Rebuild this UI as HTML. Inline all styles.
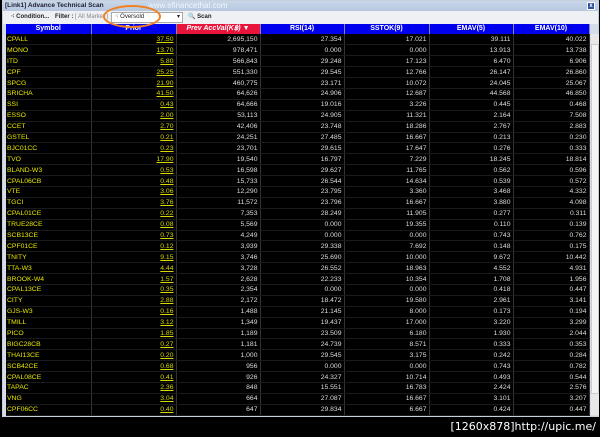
<!DOCTYPE html>
<html><head><meta charset="utf-8"><style>
*{margin:0;padding:0;box-sizing:border-box}
body{width:600px;height:437px;background:#000;position:relative;overflow:hidden;font-family:"Liberation Sans",sans-serif}
#win{position:absolute;left:2px;top:0;width:597px;height:417px;background:#d4dde8;border:1px solid #c8d0dc}
#title{position:absolute;left:0;top:0;width:100%;height:10px;background:linear-gradient(#c9d7ea,#b5c7e0);font-size:6.5px;font-weight:bold;color:#223;line-height:10px;padding-left:2px}
#close{position:absolute;right:3px;top:1px;width:8px;height:8px;background:#3050a0;border:1px solid #fff;color:#fff;font-size:6px;line-height:6px;text-align:center}
#tool{position:absolute;left:0;top:10px;width:100%;height:13px;background:#eef0f3;font-size:6px;color:#222;line-height:13px}
#tool span{position:absolute;top:0}
#grid{position:absolute;left:3px;top:23px;width:583px}
table{border-collapse:collapse;table-layout:fixed;width:583px}
th{height:10px;background:#0000ee;color:#fff;font-size:7px;font-weight:bold;border-right:1px solid #88a;text-align:center;line-height:10px}
th.red{background:#e8143c;font-style:italic}
td{height:10.9px;font-size:6.8px;color:#ddd;text-align:right;padding-right:2px;border-right:1px solid #333;border-bottom:1px solid #1a1a1a;line-height:9px;background:#000;white-space:nowrap}
td:first-child{text-align:left;color:#e8e800;padding-left:1px}
td:nth-child(2){color:#d8d800;text-decoration:underline}
#sb{position:absolute;left:588px;top:33px;width:8px;height:381px;background:#e8e8e8}
#sbt{position:absolute;left:588px;top:43px;width:8px;height:350px;background:#f4f4f4;border:1px solid #ccc}
#wm{position:absolute;right:4px;bottom:4px;color:#fff;font-size:11px;font-family:"DejaVu Sans",sans-serif}
#oval{position:absolute;left:103px;top:5px;width:58px;height:23px;border:2px solid #f08020;border-radius:50%}
</style></head><body>
<div id="win">
<div id="title">[Link1] Advance Technical Scan<span style="position:absolute;left:145px;color:#fff;font-weight:normal;font-size:8px;opacity:.8">www.efinancethai.com</span><div id="close">x</div></div>
<div id="tool"><span style="left:8px;font-weight:bold">⁖ Condition...</span><span style="left:52px;font-weight:bold">Filter : <span style="position:static;color:#888;font-weight:normal">[ All Market ]</span></span><span style="left:108px;width:72px;height:11px;top:1px;background:#fff;border:1px solid #aaa;line-height:9px;padding-left:3px">⁖ Oversold<span style="right:2px;left:auto">▾</span></span><span style="left:185px;font-weight:bold">🔍 Scan</span></div>
<div id="grid"><table>
<colgroup><col style="width:85px"><col style="width:85px"><col style="width:84px"><col style="width:84px"><col style="width:85px"><col style="width:84px"><col style="width:76px"></colgroup>
<tr><th>Symbol</th><th>Prior</th><th class="red">Prev AccVal(K฿) ▼</th><th>RSI(14)</th><th>SSTOK(9)</th><th>EMAV(5)</th><th>EMAV(10)</th></tr>
<tr><td>CPALL</td><td>37.50</td><td>2,695,150</td><td>27.354</td><td>17.021</td><td>39.111</td><td>40.022</td></tr>
<tr><td>MONO</td><td>13.70</td><td>978,471</td><td>0.000</td><td>0.000</td><td>13.913</td><td>13.738</td></tr>
<tr><td>ITD</td><td>5.80</td><td>566,843</td><td>29.248</td><td>17.123</td><td>6.470</td><td>6.906</td></tr>
<tr><td>CPF</td><td>25.25</td><td>551,330</td><td>29.545</td><td>12.766</td><td>26.147</td><td>26.860</td></tr>
<tr><td>SPCG</td><td>21.90</td><td>460,775</td><td>23.171</td><td>10.072</td><td>24.045</td><td>25.067</td></tr>
<tr><td>SRICHA</td><td>41.50</td><td>64,626</td><td>24.906</td><td>12.687</td><td>44.568</td><td>46.850</td></tr>
<tr><td>SSI</td><td>0.43</td><td>64,666</td><td>19.016</td><td>3.226</td><td>0.445</td><td>0.468</td></tr>
<tr><td>ESSO</td><td>2.00</td><td>53,113</td><td>24.905</td><td>11.321</td><td>2.164</td><td>7.508</td></tr>
<tr><td>CCET</td><td>2.70</td><td>42,406</td><td>23.748</td><td>18.286</td><td>2.767</td><td>2.883</td></tr>
<tr><td>GSTEL</td><td>0.21</td><td>24,251</td><td>27.485</td><td>16.667</td><td>0.213</td><td>0.230</td></tr>
<tr><td>BJC01CC</td><td>0.23</td><td>23,701</td><td>29.615</td><td>17.647</td><td>0.276</td><td>0.333</td></tr>
<tr><td>TVO</td><td>17.90</td><td>19,540</td><td>16.797</td><td>7.229</td><td>18.245</td><td>18.814</td></tr>
<tr><td>BLAND-W3</td><td>0.53</td><td>16,598</td><td>29.627</td><td>11.765</td><td>0.562</td><td>0.596</td></tr>
<tr><td>CPAL06CB</td><td>0.48</td><td>15,733</td><td>26.544</td><td>14.634</td><td>0.539</td><td>0.572</td></tr>
<tr><td>VTE</td><td>3.06</td><td>12,290</td><td>23.795</td><td>3.360</td><td>3.468</td><td>4.332</td></tr>
<tr><td>TGCI</td><td>3.76</td><td>11,572</td><td>23.796</td><td>16.667</td><td>3.880</td><td>4.098</td></tr>
<tr><td>CPAL01CE</td><td>0.22</td><td>7,353</td><td>28.249</td><td>11.905</td><td>0.277</td><td>0.311</td></tr>
<tr><td>TRUE28CE</td><td>0.08</td><td>5,569</td><td>0.000</td><td>19.355</td><td>0.110</td><td>0.139</td></tr>
<tr><td>SCB13CE</td><td>0.73</td><td>4,249</td><td>0.000</td><td>0.000</td><td>0.743</td><td>0.762</td></tr>
<tr><td>CPF01CE</td><td>0.12</td><td>3,939</td><td>29.338</td><td>7.692</td><td>0.148</td><td>0.175</td></tr>
<tr><td>TNITY</td><td>9.15</td><td>3,746</td><td>25.690</td><td>10.000</td><td>9.672</td><td>10.442</td></tr>
<tr><td>TTA-W3</td><td>4.44</td><td>3,728</td><td>26.552</td><td>18.963</td><td>4.552</td><td>4.931</td></tr>
<tr><td>BROOK-W4</td><td>1.57</td><td>2,628</td><td>22.233</td><td>10.354</td><td>1.708</td><td>1.956</td></tr>
<tr><td>CPAL13CE</td><td>0.35</td><td>2,354</td><td>0.000</td><td>0.000</td><td>0.418</td><td>0.447</td></tr>
<tr><td>CITY</td><td>2.88</td><td>2,172</td><td>18.472</td><td>19.580</td><td>2.961</td><td>3.141</td></tr>
<tr><td>GJS-W3</td><td>0.16</td><td>1,488</td><td>21.145</td><td>8.000</td><td>0.173</td><td>0.194</td></tr>
<tr><td>TMILL</td><td>3.12</td><td>1,349</td><td>19.437</td><td>17.000</td><td>3.220</td><td>3.299</td></tr>
<tr><td>PICO</td><td>1.85</td><td>1,189</td><td>23.509</td><td>6.180</td><td>1.930</td><td>2.044</td></tr>
<tr><td>BIGC28CB</td><td>0.27</td><td>1,181</td><td>24.739</td><td>8.571</td><td>0.333</td><td>0.353</td></tr>
<tr><td>THAI13CE</td><td>0.20</td><td>1,000</td><td>29.545</td><td>3.175</td><td>0.242</td><td>0.284</td></tr>
<tr><td>SCB42CE</td><td>0.68</td><td>956</td><td>0.000</td><td>0.000</td><td>0.743</td><td>0.782</td></tr>
<tr><td>CPAL08CE</td><td>0.41</td><td>926</td><td>24.327</td><td>10.714</td><td>0.493</td><td>0.544</td></tr>
<tr><td>TAPAC</td><td>2.36</td><td>848</td><td>15.551</td><td>16.783</td><td>2.424</td><td>2.576</td></tr>
<tr><td>VNG</td><td>3.04</td><td>664</td><td>27.087</td><td>16.667</td><td>3.101</td><td>3.207</td></tr>
<tr><td>CPF06CC</td><td>0.40</td><td>647</td><td>29.834</td><td>6.667</td><td>0.424</td><td>0.447</td></tr>
</table></div>
<div id="sb"></div><div id="sbt"></div>
</div>
<div id="oval"></div>
<div id="wm">[1260x878]http://upic.me/</div>
</body></html>
